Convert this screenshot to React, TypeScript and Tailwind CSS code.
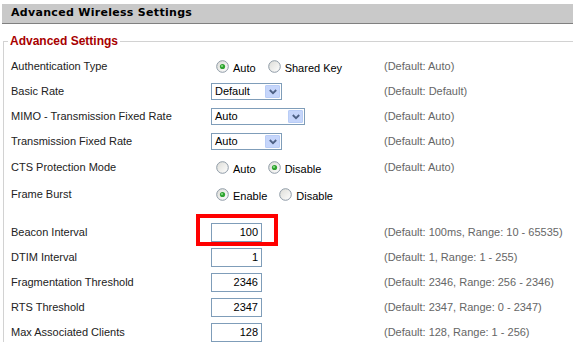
import React from "react";

function Radio({ checked }: { checked?: boolean }) {
  return (
    <svg width="13" height="13" viewBox="0 0 13 13" className="shrink-0">
      <defs>
        <linearGradient id="rg" x1="0" y1="0" x2="1" y2="1">
          <stop offset="0" stopColor="#dcdcd7" />
          <stop offset="1" stopColor="#ffffff" />
        </linearGradient>
      </defs>
      <circle cx="6.5" cy="6.5" r="5.8" fill="url(#rg)" stroke="#8e9aa6" strokeWidth="1" />
      {checked && (
        <>
          <circle cx="6.5" cy="6.5" r="2.6" fill="#2fa32f" />
          <circle cx="6" cy="6" r="1" fill="#8fe08f" />
        </>
      )}
    </svg>
  );
}

function RadioGroup({ options }: { options: { label: string; checked?: boolean }[] }) {
  return (
    <div className="flex items-center">
      {options.map((o, i) => (
        <div key={o.label} className={"flex items-center " + (i === 0 ? "ml-[5px]" : "ml-[12px]")}>
          <Radio checked={o.checked} />
          <span className="ml-[4px] mt-[4px] text-[11px] text-black leading-[13px]">{o.label}</span>
        </div>
      ))}
    </div>
  );
}

function Select({ value, width }: { value: string; width: string }) {
  return (
    <div className={"flex items-center h-[17px] border border-[#7f9db9] bg-white " + width}>
      <span className="flex-1 pl-[3px] text-[11px] leading-[13px] text-black">{value}</span>
      <div className="mr-[1px] w-[15px] h-[13px] rounded-[1px] border border-[#b9cdf6] bg-[#c6d6fb] flex items-center justify-center">
        <svg width="8" height="6" viewBox="0 0 8 6">
          <path d="M0.8 1 L4 4.2 L7.2 1" fill="none" stroke="#4d6185" strokeWidth="1.8" />
        </svg>
      </div>
    </div>
  );
}

function TextBox({ value }: { value: string }) {
  return (
    <div className="w-[51px] h-[19px] border border-[#7f9db9] bg-white flex items-center justify-end pr-[3px] text-[11px] leading-[13px] text-black">
      {value}
    </div>
  );
}

function Row({
  label,
  hint,
  h,
  children,
}: {
  label: string;
  hint: string;
  h: string;
  children: React.ReactNode;
}) {
  return (
    <div className={"grid grid-cols-[200px_173px_1fr] items-center " + h}>
      <div className="text-[11px] text-[#222] whitespace-nowrap">{label}</div>
      <div>{children}</div>
      <div className="text-[11px] text-[#666] whitespace-nowrap">{hint}</div>
    </div>
  );
}

export default function App() {
  return (
    <div className="relative w-[573px] h-[342px] overflow-hidden bg-white font-['Liberation_Sans',Arial,sans-serif]">
      <div className="pt-[4px] pl-[2px]">
        <div className="h-[20px] bg-[#c9c9c9] border-b border-[#808080] flex items-center pl-[9px] font-['DejaVu_Sans',sans-serif] font-bold text-[11px] tracking-[0.3px] text-black">
          Advanced Wireless Settings
        </div>
      </div>
      <fieldset className="ml-[3px] mt-[10px] w-[620px] border-l border-t border-[#d2d2d2] pl-[7px] pt-[6px]">
        <legend className="ml-[-3px] px-[2px] text-[12px] leading-[14px] font-bold text-[#a80000]">
          Advanced Settings
        </legend>
        <Row label="Authentication Type" hint="(Default: Auto)" h="h-[25px]">
          <RadioGroup options={[{ label: "Auto", checked: true }, { label: "Shared Key" }]} />
        </Row>
        <Row label="Basic Rate" hint="(Default: Default)" h="h-[25px]">
          <Select value="Default" width="w-[71px]" />
        </Row>
        <Row label="MIMO - Transmission Fixed Rate" hint="(Default: Auto)" h="h-[25px]">
          <Select value="Auto" width="w-[94px]" />
        </Row>
        <Row label="Transmission Fixed Rate" hint="(Default: Auto)" h="h-[25px]">
          <Select value="Auto" width="w-[71px]" />
        </Row>
        <Row label="CTS Protection Mode" hint="(Default: Auto)" h="h-[27px]">
          <RadioGroup options={[{ label: "Auto" }, { label: "Disable", checked: true }]} />
        </Row>
        <Row label="Frame Burst" hint="" h="h-[26px]">
          <RadioGroup options={[{ label: "Enable", checked: true }, { label: "Disable" }]} />
        </Row>
        <div className="h-[13px]" />
        <Row label="Beacon Interval" hint="(Default: 100ms, Range: 10 - 65535)" h="h-[25px]">
          <div className="relative w-[51px]">
            <TextBox value="100" />
            <div className="absolute left-[-15px] top-[-9px] w-[82px] h-[32px] border-[4px] border-[#ff0000]" />
          </div>
        </Row>
        <Row label="DTIM Interval" hint="(Default: 1, Range: 1 - 255)" h="h-[25px]">
          <TextBox value="1" />
        </Row>
        <Row label="Fragmentation Threshold" hint="(Default: 2346, Range: 256 - 2346)" h="h-[25px]">
          <TextBox value="2346" />
        </Row>
        <Row label="RTS Threshold" hint="(Default: 2347, Range: 0 - 2347)" h="h-[25px]">
          <TextBox value="2347" />
        </Row>
        <Row label="Max Associated Clients" hint="(Default: 128, Range: 1 - 256)" h="h-[25px]">
          <TextBox value="128" />
        </Row>
      </fieldset>
    </div>
  );
}
